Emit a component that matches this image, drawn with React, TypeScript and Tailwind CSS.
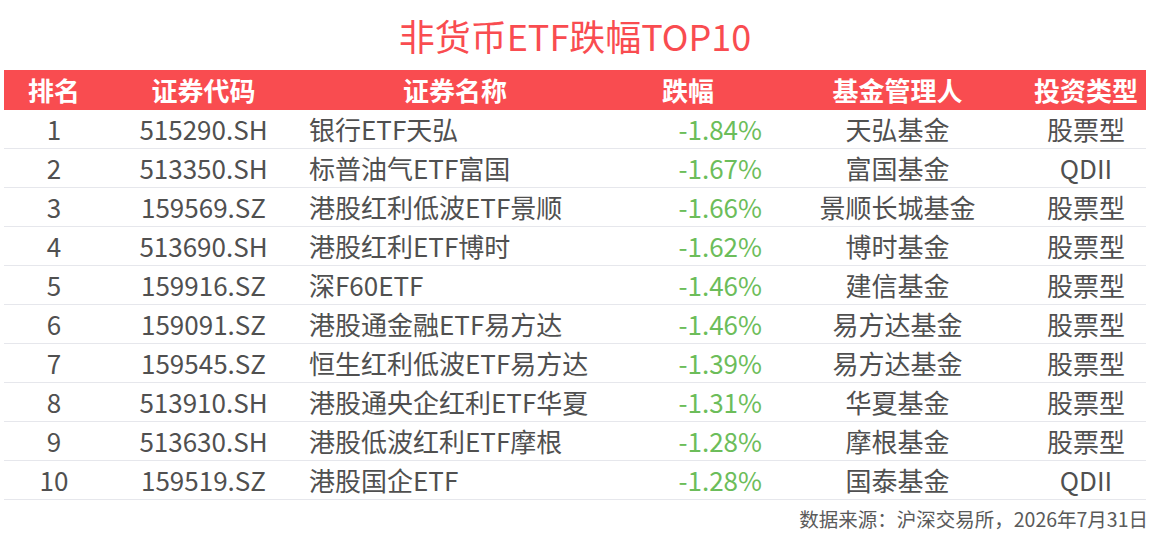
import React from "react";

const rows = [
  ["1", "515290.SH", "银行ETF天弘", "-1.84%", "天弘基金", "股票型"],
  ["2", "513350.SH", "标普油气ETF富国", "-1.67%", "富国基金", "QDII"],
  ["3", "159569.SZ", "港股红利低波ETF景顺", "-1.66%", "景顺长城基金", "股票型"],
  ["4", "513690.SH", "港股红利ETF博时", "-1.62%", "博时基金", "股票型"],
  ["5", "159916.SZ", "深F60ETF", "-1.46%", "建信基金", "股票型"],
  ["6", "159091.SZ", "港股通金融ETF易方达", "-1.46%", "易方达基金", "股票型"],
  ["7", "159545.SZ", "恒生红利低波ETF易方达", "-1.39%", "易方达基金", "股票型"],
  ["8", "513910.SH", "港股通央企红利ETF华夏", "-1.31%", "华夏基金", "股票型"],
  ["9", "513630.SH", "港股低波红利ETF摩根", "-1.28%", "摩根基金", "股票型"],
  ["10", "159519.SZ", "港股国企ETF", "-1.28%", "国泰基金", "QDII"],
];

const grid = "grid grid-cols-[100px_199px_304px_162px_257px_120px]";

export default function App() {
  return (
    <div
      className="w-[1150px] h-[540px] bg-white overflow-hidden"
      style={{ fontFamily: '"Noto Sans CJK SC", "Noto Sans", sans-serif' }}
    >
      <div className="h-[70px] flex items-center justify-center pb-[1px]">
        <h1 className="text-[36px] leading-none text-[#f94c50] font-normal">
          非货币ETF跌幅TOP10
        </h1>
      </div>
      <div className="mx-[4px] w-[1142px]">
        <div
          className={`${grid} h-[40px] bg-[#f94c50] text-white text-[26px] font-bold items-center leading-none`}
        >
          <div className="text-center">排名</div>
          <div className="text-center">证券代码</div>
          <div className="text-center">证券名称</div>
          <div className="text-center">跌幅</div>
          <div className="text-center">基金管理人</div>
          <div className="text-center">投资类型</div>
        </div>
        {rows.map((r) => (
          <div
            key={r[0]}
            className={`${grid} h-[39px] border-b border-[#e6e7ec] items-center text-[26px] leading-none text-[#505050]`}
          >
            <div className="text-center">{r[0]}</div>
            <div className="text-center">{r[1]}</div>
            <div className="pl-[6px] whitespace-nowrap">{r[2]}</div>
            <div className="text-right pr-[7px] text-[#6cbd5a]">{r[3]}</div>
            <div className="text-center whitespace-nowrap">{r[4]}</div>
            <div className="text-center">{r[5]}</div>
          </div>
        ))}
      </div>
      <div className="flex justify-end pr-[2px] pt-[9px]">
        <span className="text-[19.5px] leading-none text-[#5a5a5a]">
          数据来源：沪深交易所，2026年7月31日
        </span>
      </div>
    </div>
  );
}
